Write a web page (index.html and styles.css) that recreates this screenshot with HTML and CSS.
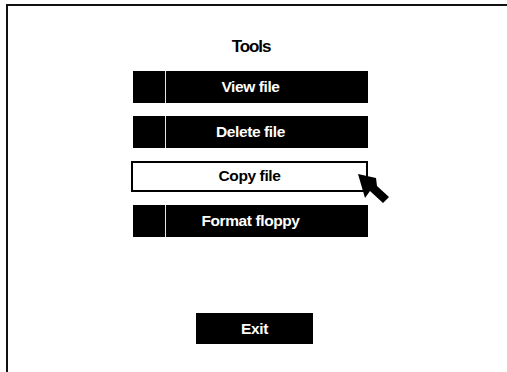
FILE: index.html
```html
<!DOCTYPE html>
<html>
<head>
<meta charset="utf-8">
<link rel="stylesheet" href="styles.css">
</head>
<body>
<div class="frame">
  <div class="menu">
    <div class="title">Tools</div>
    <div class="btn dark">View file</div>
    <div class="btn dark">Delete file</div>
    <div class="btn selected">Copy file
      <svg class="cursor" width="40" height="36" viewBox="0 0 40 36">
        <polygon points="4,3 11,27 16,20 29,32 35,26 23,15 22,7" fill="#000"/>
      </svg>
    </div>
    <div class="btn dark">Format floppy</div>
    <div class="btn exit">Exit</div>
  </div>
</div>
</body>
</html>
```

FILE: styles.css
```css
html, body {
  margin: 0;
  padding: 0;
  background: #fff;
  overflow: hidden;
}
.frame {
  margin: 4px 0 0 6px;
  height: 368px;
  box-sizing: border-box;
  border-top: 2px solid #111;
  border-left: 2px solid #111;
  padding: 32px 0 0 125px;
  font-family: "Liberation Sans", Arial, sans-serif;
}
.menu {
  width: 235px;
  display: flex;
  flex-direction: column;
  gap: 13px;
}
.title {
  font-size: 17px;
  font-weight: bold;
  line-height: 18px;
  letter-spacing: -1.1px;
  text-align: center;
  color: #000;
  margin-bottom: 2px;
  padding-left: 1px;
}
.btn {
  height: 32px;
  line-height: 32px;
  font-size: 15.5px;
  font-weight: bold;
  text-align: center;
  letter-spacing: -0.4px;
  box-sizing: border-box;
}
.dark {
  color: #fff;
  background: linear-gradient(to right, #000 32px, #e6e6e6 32px, #e6e6e6 33px, #000 33px);
}
.selected {
  position: relative;
  width: 237px;
  margin-left: -2px;
  height: 31px;
  line-height: 26px;
  border: 2px solid #000;
  background: #fff;
  color: #000;
}
.cursor {
  position: absolute;
  left: 221px;
  top: 8px;
}
.exit {
  width: 117px;
  height: 31px;
  line-height: 31px;
  margin-top: 63px;
  margin-left: 63px;
  background: #000;
  color: #fff;
}
```
